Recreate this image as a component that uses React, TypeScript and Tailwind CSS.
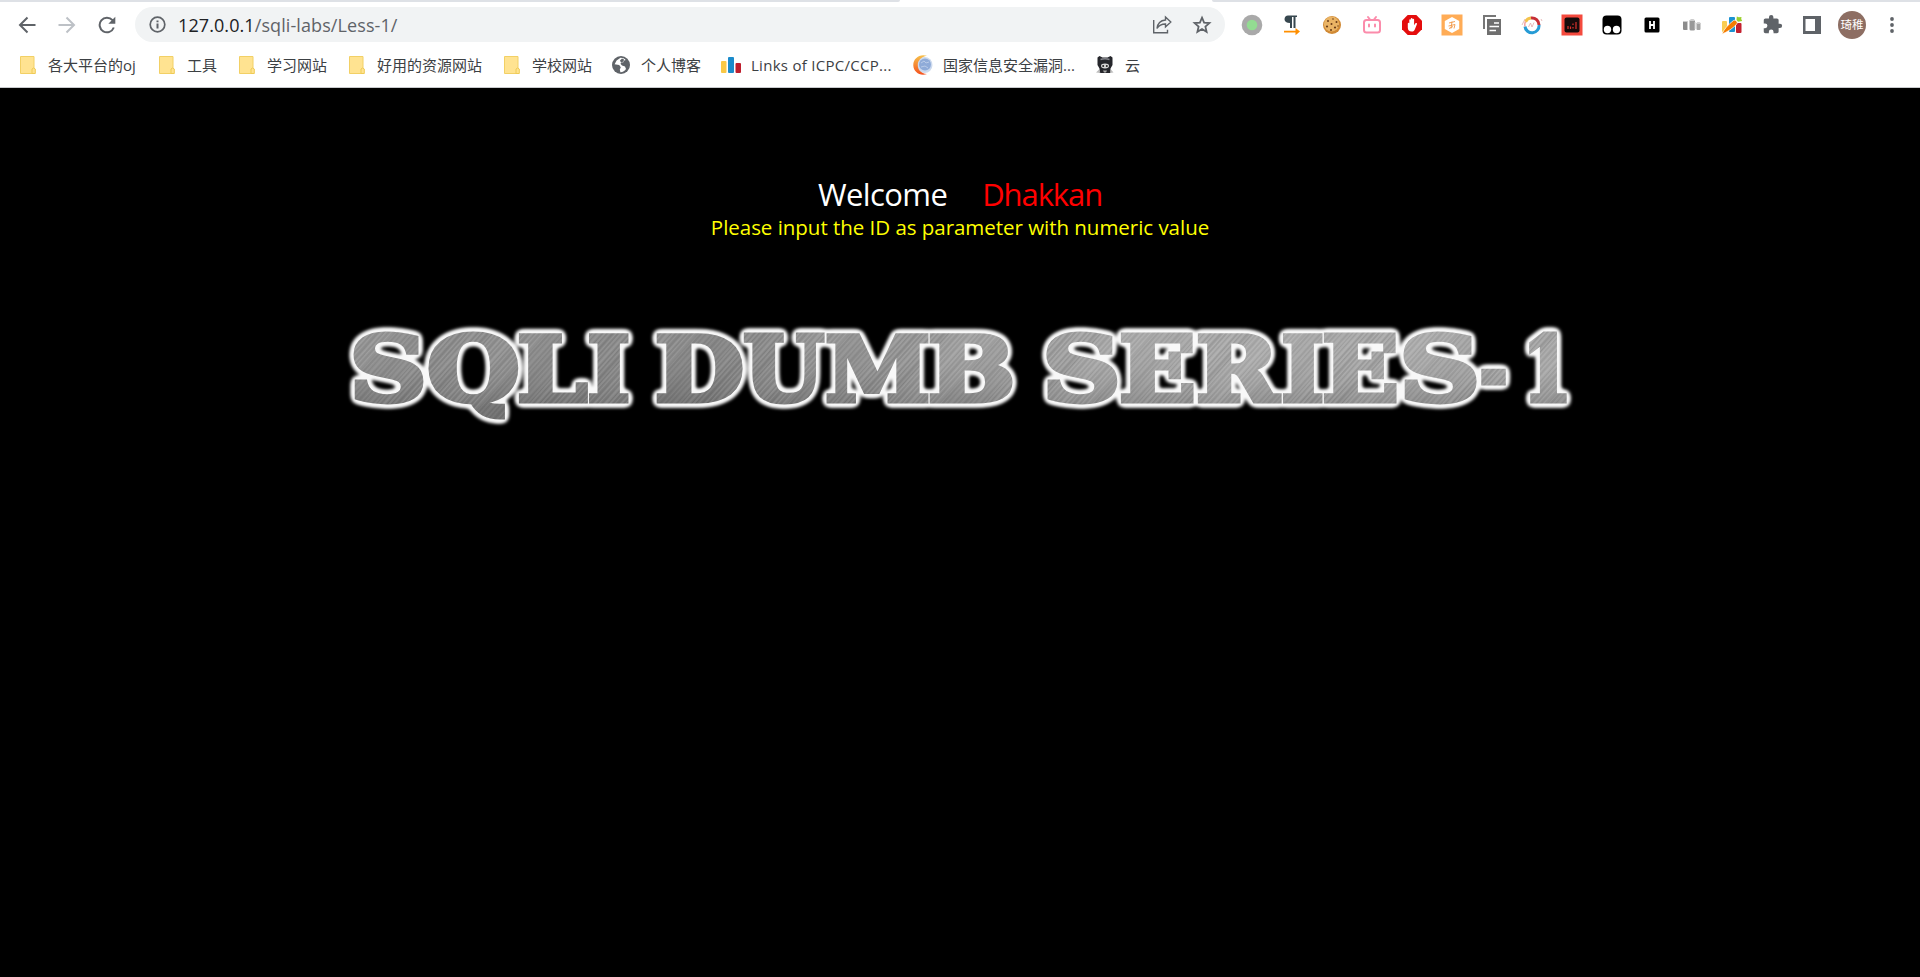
import { useMemo } from "react";
import type { ReactNode } from "react";

const UI = "font-['Open_Sans','Noto_Sans_CJK_SC',sans-serif]";

function Folder() {
  return (
    <svg width="20" height="20" viewBox="0 0 20 20">
      <path d="M2.500 1.500h13.500v17H2.500z" fill="#ffe391" stroke="#f2d065" />
      <path d="M14 18.500v-4.500q1.500-2 3.300 0v4.500z" fill="#ffe391" stroke="#efcb55" />
    </svg>
  );
}

function Globe() {
  return (
    <svg width="20" height="20" viewBox="0 0 20 20">
      <circle cx="10" cy="10" r="9" fill="#5f6368" />
      <path d="M9.500 2.800L5.600 5.500 3.600 9.200l4.600.8 1.600 2.300-1 2.200.6 2.700c2.500-.1 4.500-1.400 5.600-3.200l-1-2.400-3-1-1.500-1.800.8-1.300 2.200-.2.200-1.500 2-.8C13.300 3.500 11.500 2.700 9.500 2.800z" fill="#fff" />
      <path d="M9 5.500l2-2 2 1-.5 2-2.500 1zM10.500 9.500l3 .3 2.300 1.700 1-2.500-1.500-2-2.800 1z" fill="#5f6368" />
    </svg>
  );
}

function Bars() {
  return (
    <svg width="20" height="20" viewBox="0 0 20 20">
      <rect x="0" y="6" width="5.500" height="12" rx="1" fill="#f9c846" />
      <rect x="7" y="2" width="6" height="16" rx="1" fill="#1b8bcb" />
      <rect x="14.500" y="8" width="5.500" height="10" rx="1" fill="#be1e2d" />
    </svg>
  );
}

function Swirl() {
  return (
    <svg width="20" height="20" viewBox="0 0 20 20">
      <defs>
        <linearGradient id="swirl" x1="0" y1="0" x2="0" y2="1">
          <stop offset="0" stopColor="#f7c04a" />
          <stop offset="1" stopColor="#f4511e" />
        </linearGradient>
      </defs>
      <circle cx="11.500" cy="10" r="8" fill="#cddaee" />
      <circle cx="12" cy="9.500" r="6" fill="#8fabd8" />
      <path d="M8 8l3-2 2 2 3-1M8 12l4-1 3 2" stroke="#b9cbe8" fill="none" />
      <path d="M14 .8C6-1.500 0 4 .3 10.500.6 17 7 21.500 14 19 7.500 18.500 4.800 14.500 4.800 10S8 2 14 .8z" fill="url(#swirl)" />
    </svg>
  );
}

function Mascot() {
  return (
    <svg width="20" height="20" viewBox="0 0 20 20">
      <path d="M2.500 2.500L4.500 1l3 1.500h5l3-1.500 2 1.500V10l-2 3.500.5 4.500h-12l.5-4.500-2-3.500z" fill="#25262b" />
      <path d="M1 17.500l3.500-3.500.8 4zM18.500 17.500l-3-3.500-.5 4z" fill="#bdbdbd" />
      <ellipse cx="10" cy="11" rx="4" ry="2.400" fill="#d6d6d6" />
      <circle cx="8.200" cy="11" r="1" fill="#222" />
      <circle cx="11.800" cy="11" r="1" fill="#222" />
      <path d="M8 15.500h4l-1 2H9z" fill="#aaa" />
      <path d="M5.500 4.500q4.500-1.500 9 0" stroke="#85868c" strokeWidth="1.500" fill="none" />
    </svg>
  );
}

const bookmarks: { label: string; icon: ReactNode; cls: string }[] = [
  { label: "各大平台的oj", icon: <Folder />, cls: "w-[139px]" },
  { label: "工具", icon: <Folder />, cls: "w-20" },
  { label: "学习网站", icon: <Folder />, cls: "w-[110px]" },
  { label: "好用的资源网站", icon: <Folder />, cls: "w-[155px]" },
  { label: "学校网站", icon: <Folder />, cls: "w-[109px]" },
  { label: "个人博客", icon: <Globe />, cls: "w-[110px]" },
  { label: "Links of ICPC/CCP...", icon: <Bars />, cls: "w-48 tracking-[0.28px]" },
  { label: "国家信息安全漏洞...", icon: <Swirl />, cls: "w-[182px]" },
  { label: "云", icon: <Mascot />, cls: "w-16" },
];

const extensions: ReactNode[] = [
  <svg width="22" height="22" viewBox="0 0 22 22">
    <circle cx="11" cy="11" r="10.300" fill="#a9a9a9" />
    <circle cx="11" cy="11" r="5.300" fill="#93dc92" />
  </svg>,
  <svg width="20" height="22" viewBox="0 0 20 22">
    <path d="M6 1.500h9v1.500h-1.500v11h-2V3h-1.500v11H8V9C4.500 9 2.500 7.500 2.500 5.200S4 1.500 6 1.500z" fill="#37474f" />
    <path d="M2 16.700h11.500V14l4.500 3.600-4.500 3.600v-2.700H2z" fill="#ff8f00" />
  </svg>,
  <svg width="20" height="20" viewBox="0 0 20 20">
    <circle cx="10" cy="10" r="9" fill="#d18a35" />
    <circle cx="9.500" cy="9" r="7.600" fill="#eab465" />
    <g fill="#6b3c18">
      <circle cx="6" cy="6" r="1" /><circle cx="11" cy="4" r=".8" /><circle cx="14.500" cy="7" r="1" />
      <circle cx="9.500" cy="9" r="1" /><circle cx="5" cy="11.500" r="1.100" /><circle cx="13" cy="12.500" r="1.100" />
      <circle cx="9" cy="15" r="1" /><circle cx="16" cy="11" r=".7" />
    </g>
  </svg>,
  <svg width="20" height="20" viewBox="0 0 20 20" fill="none" stroke="#fb8cab" strokeWidth="2" strokeLinecap="round">
    <rect x="2" y="5" width="16" height="12.500" rx="2.500" />
    <path d="M6 2L8 4.500M14 2L12 4.500M7 9.500v2M13 9.500v2" />
  </svg>,
  <svg width="22" height="22" viewBox="0 0 22 22">
    <path d="M6.700 1h8.600L21 6.700v8.600L15.300 21H6.700L1 15.300V6.700z" fill="#e40d0d" />
    <path d="M6.800 9.500c0-1 1.500-1 1.500 0V6c0-1 1.500-1 1.500 0V4.700c0-1.100 1.700-1.100 1.700 0V5.500c0-1 1.600-1 1.600 0v5.700l1.200-1.700c.7-.9 2-.3 1.600.7l-2 5c-.6 1.500-1.400 2.300-3.200 2.300-2.600 0-3.900-1.300-3.900-4z" fill="#fff" />
  </svg>,
  <svg width="22" height="22" viewBox="0 0 22 22">
    <rect x=".5" y=".5" width="21" height="21" fill="#ffac56" />
    <path d="M11 3l7.200 4v8L11 19l-7.200-4V7z" fill="#fff" />
    <path d="M8 9l6-1.500M7.500 12l6.500-1.500-1 4M11 7.500l-1 7M8 14.500l4-2" stroke="#f29747" strokeWidth=".9" fill="none" />
  </svg>,
  <svg width="20" height="22" viewBox="0 0 20 22">
    <path d="M1 1h13v2H3v12H1z" fill="#777" />
    <path d="M5 5h14v16H5z" fill="#6f6f6f" />
    <path d="M12 9h5M7.500 12.500H17M7.500 16.500H14" stroke="#fff" strokeWidth="1.500" />
  </svg>,
  <svg width="22" height="20" viewBox="0 0 22 20" fill="none" strokeWidth="3">
    <path d="M4.500 6.700A7 7 0 0 1 10 3" stroke="#f4c34a" />
    <path d="M10 3a7 7 0 0 1 8 7" stroke="#c72f36" />
    <path d="M18 10a7 7 0 0 1-14 1.500" stroke="#269bd5" />
    <path d="M4 11.500a7 7 0 0 1 .5-4.800" stroke="#f2a0a0" strokeWidth="1.500" />
    <path d="M1 10l3-6M20 4l1 2M7.500 12l2-4 1.500 4 2-4.500" stroke="#e2aaaa" strokeWidth=".8" />
  </svg>,
  <svg width="22" height="22" viewBox="0 0 22 22">
    <rect x=".5" y=".5" width="21" height="21" fill="#f44a3e" />
    <rect x="3.500" y="3.500" width="15" height="15" rx="2" fill="#150b0b" />
    <path d="M7 12v3M9.500 12.500v2.500M12 9.500v1.500M12 13v1.500M15 8v7" stroke="#d7322d" strokeWidth="1.200" />
  </svg>,
  <svg width="20" height="20" viewBox="0 0 20 20">
    <rect x=".5" y=".5" width="19" height="19" rx="4" fill="#000" />
    <circle cx="5.500" cy="14.500" r="3.700" fill="#fff" />
    <circle cx="14.500" cy="14.500" r="3.700" fill="#fff" />
  </svg>,
  <svg width="16" height="16" viewBox="0 0 16 16">
    <rect x=".5" y=".5" width="15" height="15" rx="1.500" fill="#000" />
    <path d="M6 4v8M10 4v8M6 8h4" stroke="#fff" strokeWidth="1.800" />
  </svg>,
  <svg width="18" height="14" viewBox="0 0 18 14">
    <rect x="0" y="3" width="4.500" height="9" rx="1" fill="#8c8c8c" />
    <rect x="6.500" y="1.500" width="5.500" height="11" rx="1.500" fill="#999" />
    <rect x="13.500" y="4.500" width="4" height="7.500" rx="1" fill="#a5a5a5" />
    <path d="M0 3.500h4.500M6.500 2.500H12M13.500 5.500h4M4.500 4v8M12 4v7" stroke="#ccc" />
  </svg>,
  <svg width="22" height="20" viewBox="0 0 22 20">
    <rect x="1" y="6" width="5" height="11" rx="1" fill="#f9cd52" />
    <rect x="8" y="2" width="6" height="15" rx="1" fill="#1b92d1" />
    <rect x="15" y="8" width="5.500" height="10" rx="1" fill="#c4202e" />
    <path d="M.8 19.200C3 14.500 7 9.500 12.500 5.500c2-1 4.500 1.300 3.500 3.300C12 13.500 6 17 .8 19.200z" fill="#f57c00" stroke="#fff" strokeWidth=".7" />
    <path d="M15.500 5l.3-3.500 2 .7L20.500 2l-.3 2 1 2-4.200.7z" fill="#9bd02c" />
  </svg>,
  <svg width="21" height="21" viewBox="0 0 24 24" fill="#5f6368">
    <path d="M20.500 11H19V7c0-1.100-.9-2-2-2h-4V3.500a2.500 2.500 0 0 0-5 0V5H4c-1.100 0-1.990.9-1.990 2v3.800H3.500a2.700 2.700 0 0 1 0 5.400H2V20c0 1.100.9 2 2 2h3.800v-1.500a2.700 2.700 0 0 1 5.400 0V22H17c1.100 0 2-.9 2-2v-4h1.500a2.500 2.500 0 0 0 0-5z" />
  </svg>,
  <svg width="18" height="18" viewBox="0 0 18 18">
    <path d="M0 0h18v18H0z" fill="#5f6368" />
    <path d="M2.500 3H12v12H2.500z" fill="#fff" />
  </svg>,
  <span className="flex size-7 items-center justify-center rounded-full bg-[#8d6e63] text-[11.500px] leading-none text-white">琦稚</span>,
  <svg width="6" height="18" viewBox="0 0 6 18" fill="#5f6368">
    <circle cx="3" cy="3" r="1.900" /><circle cx="3" cy="9" r="1.900" /><circle cx="3" cy="15" r="1.900" />
  </svg>,
];

function Toolbar() {
  return (
    <div className="flex h-[45px] items-center">
      <div className="flex w-[135px] items-center gap-[22px] pl-[18px]">
        <svg width="18" height="18" viewBox="0 0 18 18" fill="none" stroke="#5f6368" strokeWidth="2"><path d="M17.500 9H2.500M9.500 1.500L2 9l7.500 7.500" /></svg>
        <svg width="18" height="18" viewBox="0 0 18 18" fill="none" stroke="#bdc1c6" strokeWidth="2"><path d="M.5 9h15M8.500 1.500L16 9l-7.500 7.500" /></svg>
        <svg width="18" height="18" viewBox="0 0 18 18" fill="none" stroke="#5f6368" strokeWidth="2"><path d="M15.800 11.500A7.300 7.300 0 1 1 14.500 4.200L16 6" /><path d="M17.300.7v7h-7z" fill="#5f6368" stroke="none" /></svg>
      </div>
      <div className="flex h-[35px] w-[1090px] items-center rounded-full bg-[#f1f3f4] pr-[13px] pl-[14px]">
        <svg width="17" height="17" viewBox="0 0 17 17" fill="none" stroke="#5f6368" strokeWidth="1.700"><circle cx="8.500" cy="8.500" r="7.300" /><path d="M8.500 7.500v5M8.500 4.400v1.800" strokeWidth="2" /></svg>
        <span className="ml-3 flex-1 text-[18px] leading-6 tracking-[0.09px] text-[#5f6368]"><span className="text-[#202124]">127.0.0.1</span>/sqli-labs/Less-1/</span>
        <svg className="mr-5" width="20" height="20" viewBox="0 0 20 20" fill="none" stroke="#5f6368" strokeWidth="1.400">
          <path d="M1.700 5v12.700H15.500v-3" />
          <path d="M13.500 2l5.300 5-5.300 5V9c-4 0-6.500 1.200-8.500 4.500C5.500 9 8 5.500 13.500 5z" />
        </svg>
        <svg width="20" height="20" viewBox="0 0 20 20" fill="none" stroke="#5f6368" strokeWidth="1.800"><path d="M10 2.700l2.100 5 5.300.4-4 3.500 1.200 5.200L10 14l-4.600 2.800 1.200-5.200-4-3.500 5.300-.4z" /></svg>
      </div>
      <div className="flex flex-1 items-center pl-[7px]">
        {extensions.map((icon, i) => (
          <div key={i} className="flex w-10 shrink-0 items-center justify-center">{icon}</div>
        ))}
      </div>
    </div>
  );
}

type Glyph = [char: string, left: number, right: number];

const BANNER_WORDS: Glyph[][] = [
  [["S", 13, 83], ["Q", 88, 178], ["L", 179, 248], ["I", 249, 289]],
  [["D", 317, 403], ["U", 404, 485], ["M", 486, 589], ["B", 590, 673]],
  [["S", 706, 777], ["E", 781, 854], ["R", 858, 942], ["I", 943, 983], ["E", 984, 1057], ["S", 1063, 1136], ["-", 1140, 1167], ["1", 1188, 1228]],
];
const FONT_SIZE = 89;
const OUTSET = 2.5;

/** Stretches a glyph so that its ink, plus the stroke, spans left..right. */
function fitGlyph(ctx: CanvasRenderingContext2D, [char, left, right]: Glyph) {
  const m = ctx.measureText(char);
  const ink = m.actualBoundingBoxRight + m.actualBoundingBoxLeft;
  const scale = (right - left - OUTSET * 2) / ink;
  return { char, x: left + OUTSET + m.actualBoundingBoxLeft * scale, length: m.width * scale };
}

const STREAKS = Array.from({ length: 60 }, (_, i) => ({
  x: (i * 37) % 113,
  width: 0.8 + ((i * 7) % 5) * 0.5,
  light: i % 2 === 0,
  opacity: 0.05 + ((i * 11) % 6) * 0.02,
}));

function Banner() {
  const words = useMemo(() => {
    const ctx = document.createElement("canvas").getContext("2d")!;
    ctx.font = `bold ${FONT_SIZE}px "DejaVu Serif"`;
    return BANNER_WORDS.map((word) => word.map((g) => fitGlyph(ctx, g)));
  }, []);
  return (
    <svg className="block overflow-visible" width="1240" height="130" viewBox="0 0 1240 130">
      <defs>
        <linearGradient id="sheen" x1="0" y1="0" x2="1" y2="0">
          <stop offset="0" stopColor="#8a8a8a" />
          <stop offset=".12" stopColor="#868686" />
          <stop offset=".3" stopColor="#7e7e7e" />
          <stop offset=".52" stopColor="#989898" />
          <stop offset=".68" stopColor="#a4a4a4" />
          <stop offset="1" stopColor="#a0a0a0" />
        </linearGradient>
        <linearGradient id="shade" x1="0" y1="0" x2="0" y2="1">
          <stop offset=".1" stopColor="#fff" stopOpacity=".1" />
          <stop offset=".4" stopColor="#fff" stopOpacity=".06" />
          <stop offset=".72" stopColor="#000" stopOpacity=".14" />
        </linearGradient>
        <pattern id="streaks" width="113" height="113" patternUnits="userSpaceOnUse" patternTransform="rotate(42)">
          {STREAKS.map((s, i) => (
            <rect key={i} x={s.x} width={s.width} height="113" fill={s.light ? "#fff" : "#333"} opacity={s.opacity} />
          ))}
        </pattern>
        <pattern id="metal" x="-20" y="-10" width="1290" height="150" patternUnits="userSpaceOnUse">
          <rect width="1290" height="150" fill="url(#sheen)" />
          <rect width="1290" height="150" fill="url(#shade)" />
          <rect width="1290" height="150" fill="url(#streaks)" />
        </pattern>
        <filter id="halo" filterUnits="userSpaceOnUse" x="-20" y="-20" width="1290" height="170" colorInterpolationFilters="sRGB">
          <feGaussianBlur in="SourceAlpha" stdDeviation="3.400" result="soft" />
          <feComponentTransfer in="soft" result="thick"><feFuncA type="linear" slope="7" intercept="-0.12" /></feComponentTransfer>
          <feFlood floodColor="#f8f8f8" />
          <feComposite in2="thick" operator="in" result="glow" />
          <feGaussianBlur in="glow" stdDeviation="1.200" result="glowSoft" />
          <feMerge><feMergeNode in="glowSoft" /><feMergeNode in="SourceGraphic" /></feMerge>
        </filter>
      </defs>
      <text y="90.500" filter="url(#halo)" fill="url(#metal)" stroke="url(#metal)" strokeWidth={OUTSET * 2} strokeLinejoin="miter" fontFamily="DejaVu Serif" fontWeight="700" fontSize={FONT_SIZE}>
        {words.map((word, w) => (
          <tspan key={w}>
            {word.map((g) => (
              <tspan key={g.x} x={g.x} textLength={g.length} lengthAdjust="spacingAndGlyphs">{g.char}</tspan>
            ))}
          </tspan>
        ))}
      </text>
    </svg>
  );
}

export default function App() {
  return (
    <div className={`flex h-[977px] w-[1920px] flex-col overflow-hidden bg-black ${UI}`}>
      <header className="flex h-[88px] flex-col border-b border-[#c8cacd] bg-white">
        <div className="flex h-[2px] justify-between">
          <div className="w-[900px] rounded-br-full bg-[#dee1e6]" />
          <div className="w-[708px] rounded-bl-full bg-[#dee1e6]" />
        </div>
        <Toolbar />
        <nav className="flex h-[35px] items-center pl-[18px] text-[15px] text-[#3c4043]">
          {bookmarks.map((b) => (
            <div key={b.label} className={`flex shrink-0 items-center gap-[10px] whitespace-nowrap ${b.cls}`}>
              <span className="shrink-0">{b.icon}</span>
              <span className="leading-5">{b.label}</span>
            </div>
          ))}
        </nav>
      </header>
      <main className="flex flex-1 flex-col items-center pt-[84px]">
        <h1 className="flex h-11 items-center gap-[35px] text-[31px] leading-none">
          <span className="tracking-[-0.6px] text-white">Welcome</span>
          <span className="tracking-[-1.1px] text-[#ff0000]">Dhakkan</span>
        </h1>
        <p className="h-[22px] text-[20.500px] leading-[22px] tracking-[-0.03px] whitespace-nowrap text-[#ffff00]">Please input the ID as parameter with numeric value</p>
        <div className="mt-[72px]"><Banner /></div>
      </main>
    </div>
  );
}
